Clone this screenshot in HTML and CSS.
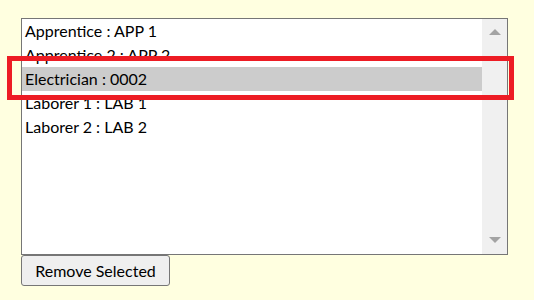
FILE: index.html
```html
<!DOCTYPE html>
<html lang="en">
<head>
  <meta charset="UTF-8" />
  <title>Crew List</title>
  <link rel="stylesheet" href="styles.css">
</head>
<body>
  <div class="panel">
    <div class="listbox">
      <div class="items">
        <div class="item">Apprentice : APP 1</div>
        <div class="item">Apprentice 2 : APP 2</div>
        <div class="item selected">Electrician : 0002</div>
        <div class="item">Laborer 1 : LAB 1</div>
        <div class="item">Laborer 2 : LAB 2</div>
      </div>
      <div class="scrollbar">
        <span class="arrow up"></span>
        <span class="arrow down"></span>
      </div>
    </div>
    <div class="callout"></div>
    <button class="remove-btn">Remove Selected</button>
  </div>
</body>
</html>
```

FILE: styles.css
```css
body {
  margin: 0;
  padding: 18px 0 0 21px;
  background-color: #ffffe0;
  font-family: Lato, "Open Sans", sans-serif;
  font-size: 16px;
  color: #000;
}
.panel {
  position: relative;
  width: 487px;
}
.listbox {
  display: flex;
  height: 235px;
  border: 1px solid #767676;
  background: white;
}
.items {
  flex: 1;
}
.item {
  height: 24px;
  line-height: 24px;
  padding-left: 3px;
  white-space: nowrap;
}
.item.selected {
  background-color: #cccccc;
}
.scrollbar {
  width: 25px;
  background-color: #f0f0f0;
  display: flex;
  flex-direction: column;
  justify-content: space-between;
  align-items: center;
  padding: 10px 0 11px;
}
.arrow {
  width: 0;
  height: 0;
  border-left: 6px solid transparent;
  border-right: 6px solid transparent;
}
.arrow.up {
  border-bottom: 6px solid #a3a3a3;
}
.arrow.down {
  border-top: 6px solid #a3a3a3;
}
.callout {
  position: absolute;
  left: -14px;
  top: 38px;
  width: 497px;
  height: 34px;
  border: 5px solid #ed1c24;
}
.remove-btn {
  display: block;
  width: 149px;
  height: 31px;
  margin: 0;
  padding: 0;
  font-family: Lato, "Open Sans", sans-serif;
  font-size: 16px;
  color: #000;
  background-color: #efefef;
  border: 1px solid #767676;
  border-radius: 3px;
}
```
